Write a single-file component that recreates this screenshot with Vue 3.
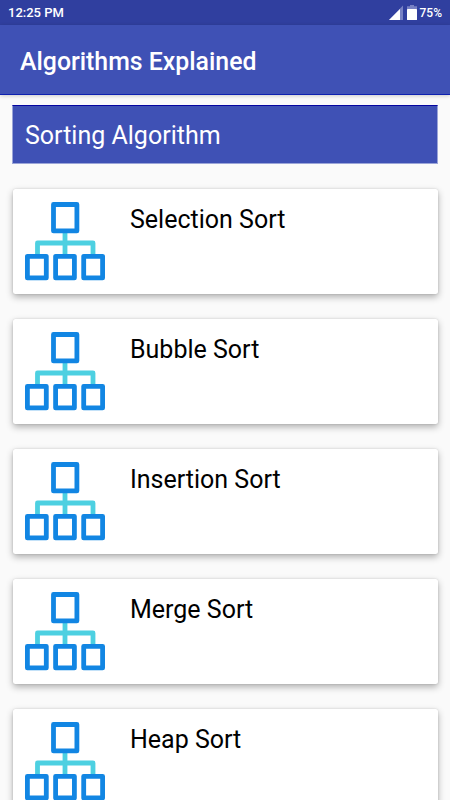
<template>
  <div class="screen">
    <div class="status-bar">
      <span class="time">12:25 PM</span>
      <div class="indicators">
        <svg class="signal" width="14" height="15" viewBox="0 0 14 15">
          <path d="M0 15L14 0.5V15Z" fill="#7781c4" />
          <path d="M0 15L11 4V15Z" fill="#fff" />
        </svg>
        <svg class="battery" width="10" height="15" viewBox="0 0 10 15">
          <path d="M3 0H7V1.2H10V4H0V1.2H3Z" fill="#7781c4" />
          <rect y="4" width="10" height="11" rx="0.5" fill="#fff" />
        </svg>
        <span class="percent">75%</span>
      </div>
    </div>
    <header class="toolbar">
      <h1>Algorithms Explained</h1>
    </header>
    <main class="content">
      <h2 class="section-title">Sorting Algorithm</h2>
      <div v-for="name in algorithms" :key="name" class="card">
        <svg class="icon" width="80" height="80" viewBox="0 0 80 80" fill="none" stroke-width="4.8" stroke-linejoin="round">
          <path d="M40 31V53M12.5 53V42H68V53" stroke="#4dd0e1" />
          <g stroke="#1286e3">
            <rect x="28.5" y="3.5" width="23.4" height="26.4" />
            <rect x="2.4" y="55.3" width="18.9" height="21.6" />
            <rect x="30.6" y="55.3" width="18.8" height="21.6" />
            <rect x="58.7" y="55.3" width="18.9" height="21.6" />
          </g>
        </svg>
        <span class="name">{{ name }}</span>
      </div>
    </main>
  </div>
</template>

<script setup>
const algorithms = ['Selection Sort', 'Bubble Sort', 'Insertion Sort', 'Merge Sort', 'Heap Sort']
</script>

<style>
body { margin: 0; background: #fafafa; overflow: hidden; }
</style>

<style scoped>
.screen { height: 800px; overflow: hidden; background: #fafafa; font-family: Roboto, sans-serif; color: #000; }
.status-bar { height: 25px; padding: 0 8px; box-sizing: border-box; display: flex; align-items: center; justify-content: space-between; background: #303f9f; color: #fff; font-weight: 500; }
.time { font-size: 13px; line-height: 25px; }
.indicators { display: flex; align-items: center; }
.signal { margin: 0 4px 0 0; }
.battery { margin-right: 3px; }
.percent { margin-top: 1px; font-size: 12px; line-height: 25px; }
.toolbar { height: 70px; padding-left: 20px; box-sizing: border-box; display: flex; align-items: center; background: #3f51b5; border-bottom: 1px solid #0d20b0; box-shadow: 0 1px 4px rgba(0,0,0,0.2); }
h1 { margin: 4px 0 0; color: #fff; font-size: 24.85px; line-height: 30px; font-weight: 500; }
.content { padding: 10px 12px 0; }
.section-title { height: 59px; margin: 0 0 25px; padding: 2px 12px 0; box-sizing: border-box; border: 1px solid #9ba5d8; border-top-color: #0505a0; background: #3f51b5; color: #fff; font-size: 25px; line-height: 56px; font-weight: 400; }
.card { height: 105px; margin: 0 0.5px 25px; padding: 12px 12.5px; box-sizing: border-box; display: flex; align-items: flex-start; background: #fff; border-radius: 2.5px; box-shadow: 0 0 2px rgba(0,0,0,0.15), 0 3px 7px rgba(0,0,0,0.3); }
.icon { flex: none; margin-right: 25px; }
.name { margin-top: 4px; font-size: 25px; line-height: 30px; }
</style>
